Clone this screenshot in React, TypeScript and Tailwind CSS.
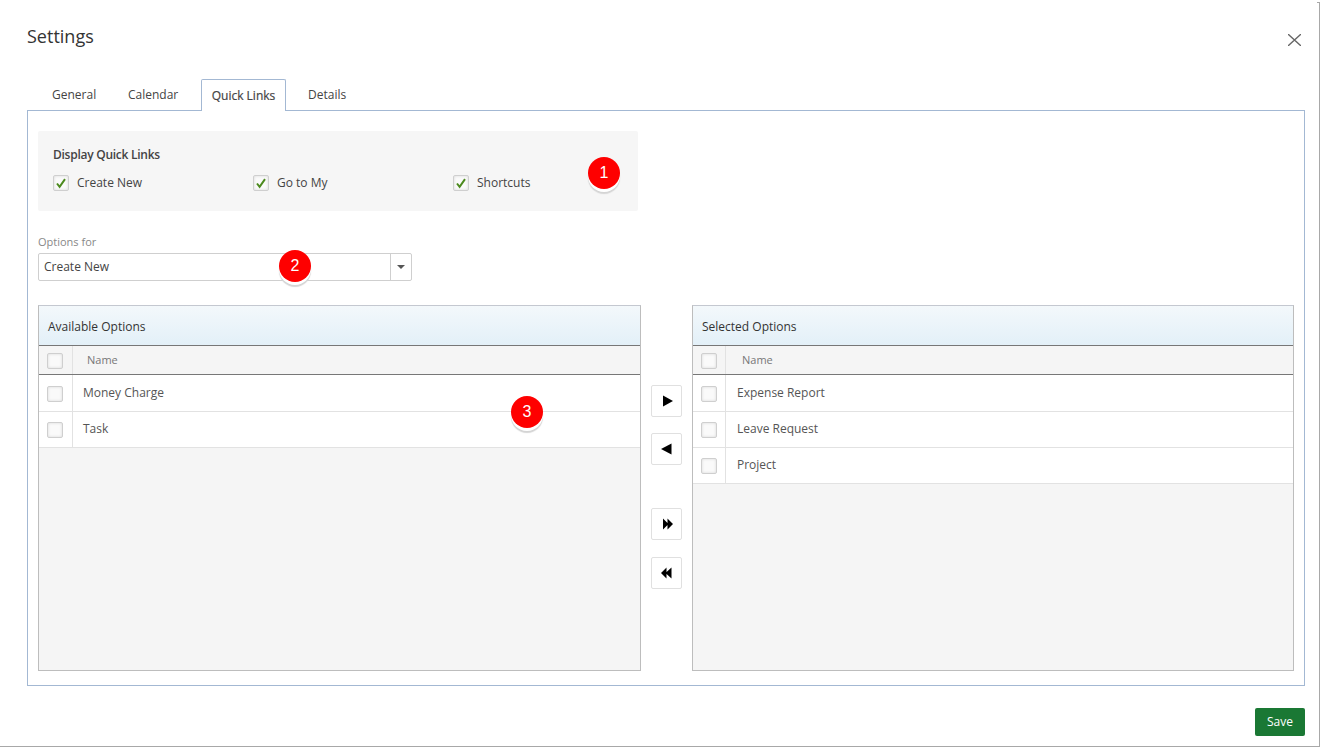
import React from "react";

function Box({ checked = false }: { checked?: boolean }) {
  return (
    <span className="flex h-[16px] w-[16px] shrink-0 items-center justify-center rounded-[2px] border border-[#cfcfcf] bg-[#fafafa] shadow-[inset_0_0_3px_rgba(0,0,0,0.14)]">
      {checked && (
        <svg width="12" height="12" viewBox="0 0 12 12" fill="none">
          <path d="M2 6.5 L4.6 9.8 L10 2.2" stroke="#4c8a1e" strokeWidth="2" />
        </svg>
      )}
    </span>
  );
}

function Check({ label }: { label: string }) {
  return (
    <div className="flex w-[200px] shrink-0 items-center gap-[8px]">
      <Box checked />
      <span className="text-[12px] text-[#444]">{label}</span>
    </div>
  );
}

function ListPanel({
  title,
  rows,
  className,
  colClass,
  namePad,
  rowPad,
}: {
  title: string;
  rows: string[];
  className: string;
  colClass: string;
  namePad: string;
  rowPad: string;
}) {
  return (
    <div className={`flex h-[366px] flex-col border border-[#bdbdbd] border-t-[#c4c8d0] bg-[#f5f5f5] ${className}`}>
      <div className="flex h-[40px] items-center border-b border-b-[#777] bg-gradient-to-b from-[#f3f8fb] to-[#e3f0f8] pt-[2px] pl-[9px] text-[12px] text-[#333]">
        {title}
      </div>
      <div className="flex h-[29px] border-b border-b-[#777] bg-[#f5f5f5]">
        <div className={`flex items-center border-r border-r-[#e2e2e2] pt-[2px] pl-[8px] ${colClass}`}>
          <Box />
        </div>
        <div className={`flex items-center text-[11px] text-[#777] ${namePad}`}>Name</div>
      </div>
      {rows.map((r, i) => (
        <div key={r} className={`flex border-b border-b-[#e2e2e2] bg-white ${i === 0 ? "h-[37px]" : "h-[36px]"}`}>
          <div className={`flex items-center border-r border-r-[#e2e2e2] pt-[1px] pl-[8px] ${colClass}`}>
            <Box />
          </div>
          <div className={`flex items-center text-[12px] text-[#555] ${i === 0 ? "pb-[1px]" : "pb-[2px]"} ${rowPad}`}>{r}</div>
        </div>
      ))}
    </div>
  );
}

function MoveButton({ d, className = "" }: { d: string; className?: string }) {
  return (
    <button className={`flex h-[32px] w-[31px] items-center justify-center rounded-[2px] border border-[#e0e0e0] bg-white ${className}`}>
      <svg width="12" height="12" viewBox="0 0 12 12">
        <path d={d} fill="#000" />
      </svg>
    </button>
  );
}

function Badge({ n, className }: { n: number; className: string }) {
  return (
    <div
      className={`absolute flex h-[32px] w-[32px] items-center justify-center rounded-full bg-[#fe0000] text-[16px] text-white shadow-[0_3px_0_#fff,0_5px_1px_#d4d4d4] ${className}`}
      style={{ fontFamily: '"Liberation Sans", sans-serif' }}
    >
      {n}
    </div>
  );
}

export default function App() {
  return (
    <div
      className="relative flex h-[747px] w-[1320px] flex-col border-r border-b border-r-[#a8a8a8] border-b-[#a8a8a8] bg-white pl-[27px] pr-[13px]"
      style={{ fontFamily: '"Open Sans", sans-serif' }}
    >
      <div className="flex h-[79px] items-start justify-between">
        <h1 className="mt-[23px] text-[18px] leading-[26px] text-[#333]">Settings</h1>
        <svg className="mt-[34px] mr-[5px]" width="13" height="12" viewBox="0 0 13 12" fill="none">
          <path d="M0 0 L13 12 M13 0 L0 12" stroke="#666" strokeWidth="1.3" />
        </svg>
      </div>

      <div className="relative z-10 flex h-[32px] pl-[13px] text-[12px] text-[#444]">
        <div className="flex h-[31px] w-[76px] items-center pl-[12px]">General</div>
        <div className="flex h-[31px] w-[85px] items-center pl-[12px]">Calendar</div>
        <div className="flex h-[32px] w-[85px] items-center justify-center rounded-t-[2px] border border-b-0 border-[#a3b8d3] bg-white pt-[1px] text-[#444]">
          <span className="[-webkit-text-stroke:0.2px_#444]">Quick Links</span>
        </div>
        <div className="flex h-[31px] items-center pl-[22px]">Details</div>
      </div>

      <div className="-mt-[1px] flex h-[576px] w-[1278px] flex-col border border-[#a3b8d3] pt-[20px] pl-[10px]">
        <div className="h-[80px] w-[600px] rounded-[2px] bg-[#f6f6f6] pt-[16px] pl-[15px]">
          <div className="text-[12px] leading-[16px] font-semibold tracking-[-0.26px] text-[#444]">Display Quick Links</div>
          <div className="mt-[11px] flex">
            <Check label="Create New" />
            <Check label="Go to My" />
            <Check label="Shortcuts" />
          </div>
        </div>

        <label className="mt-[23px] text-[11px] leading-[15px] text-[#888]">Options for</label>
        <div className="mt-[4px] flex h-[28px] w-[374px] rounded-[2px] border border-[#cfcfcf] bg-white">
          <div className="flex flex-1 items-center pl-[5px] text-[12px] text-[#444]">Create New</div>
          <div className="flex w-[21px] items-center justify-center border-l border-l-[#cfcfcf] pr-[1px]">
            <svg width="8" height="4" viewBox="0 0 8 4">
              <path d="M0 0 H8 L4 4 Z" fill="#555" />
            </svg>
          </div>
        </div>

        <div className="mt-[24px] flex">
          <ListPanel
            title="Available Options"
            rows={["Money Charge", "Task"]}
            className="w-[603px]"
            colClass="w-[34px]"
            namePad="pl-[14px]"
            rowPad="pl-[10px]"
          />
          <div className="flex w-[51px] flex-col items-center pt-[80px]">
            <MoveButton d="M2 0.5 L12 6 L2 11.5 Z" />
            <MoveButton d="M0 6 L10.5 0.5 V11.5 Z" className="mt-[16px]" />
            <MoveButton d="M2 0.5 L7.5 6 L2 11.5 Z M6.5 0.5 L12 6 L6.5 11.5 Z" className="mt-[43px]" />
            <MoveButton d="M0 6 L5.5 0.5 V11.5 Z M4.5 6 L10.5 0.5 V11.5 Z" className="mt-[17px]" />
          </div>
          <ListPanel
            title="Selected Options"
            rows={["Expense Report", "Leave Request", "Project"]}
            className="w-[602px]"
            colClass="w-[33px]"
            namePad="pl-[16px]"
            rowPad="pl-[11px]"
          />
        </div>
      </div>

      <div className="flex flex-1 items-start justify-end pt-[22px] pr-[1px]">
        <button className="h-[28px] w-[50px] rounded-[2px] bg-[#1a7834] text-[12px] text-white">Save</button>
      </div>

      <Badge n={1} className="left-[588px] top-[157px]" />
      <Badge n={2} className="left-[279px] top-[250px]" />
      <Badge n={3} className="left-[511px] top-[396px]" />
      <div className="absolute top-0 right-[-1px] h-[2px] w-[1px] bg-white" />
      <div className="absolute top-[2px] right-0 h-[1px] w-[2px] bg-[#a8a8a8]" />
    </div>
  );
}
